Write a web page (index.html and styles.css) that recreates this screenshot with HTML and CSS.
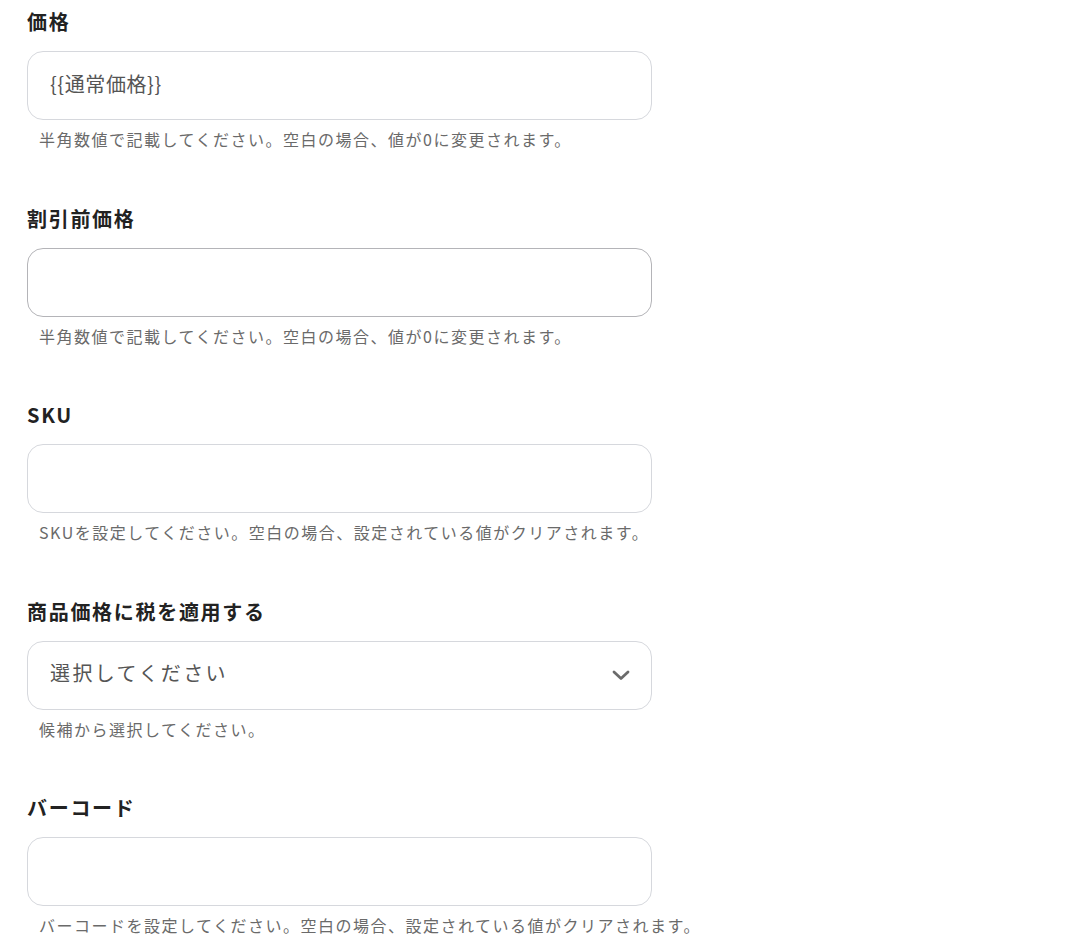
FILE: index.html
```html
<!DOCTYPE html>
<html lang="ja">
<head>
<meta charset="utf-8">
<link rel="stylesheet" href="styles.css">
</head>
<body>
<form class="form">
  <div class="field">
    <label class="label">価格</label>
    <div class="input"><span class="value value-tight">{{通常価格}}</span></div>
    <p class="help">半角数値で記載してください。空白の場合、値が0に変更されます。</p>
  </div>
  <div class="field">
    <label class="label">割引前価格</label>
    <div class="input input-hover"></div>
    <p class="help">半角数値で記載してください。空白の場合、値が0に変更されます。</p>
  </div>
  <div class="field">
    <label class="label">SKU</label>
    <div class="input"></div>
    <p class="help">SKUを設定してください。空白の場合、設定されている値がクリアされます。</p>
  </div>
  <div class="field">
    <label class="label">商品価格に税を適用する</label>
    <div class="input select"><span class="value">選択してください</span>
      <svg class="chevron" width="18" height="12" viewBox="0 0 18 12"><path d="M2 3 L9 9.5 L16 3" fill="none" stroke="#6b6b6b" stroke-width="2.8" stroke-linecap="round" stroke-linejoin="round"/></svg>
    </div>
    <p class="help">候補から選択してください。</p>
  </div>
  <div class="field">
    <label class="label">バーコード</label>
    <div class="input"></div>
    <p class="help">バーコードを設定してください。空白の場合、設定されている値がクリアされます。</p>
  </div>
</form>
</body>
</html>
```
FILE: styles.css
```css
html, body {
  margin: 0;
  padding: 0;
  background: #ffffff;
}
body {
  font-family: "Noto Sans CJK JP", "Noto Sans", sans-serif;
  color: #222;
}
.form {
  display: flex;
  flex-direction: column;
  padding: 7px 0 0 27px;
  gap: 54.5px;
}
.field {
  display: flex;
  flex-direction: column;
}
.label {
  display: block;
  font-size: 20px;
  line-height: 30px;
  font-weight: 700;
  letter-spacing: 1.7px;
  color: #222;
}
.input {
  box-sizing: border-box;
  margin-top: 14px;
  width: 625px;
  height: 69px;
  border: 1px solid #d6d8dd;
  border-radius: 16px;
  background: #fff;
  display: flex;
  align-items: center;
  padding: 0 22px;
}
.input-hover {
  border-color: #b4b4b8;
}
.value {
  font-size: 20px;
  line-height: 28px;
  letter-spacing: 2.4px;
  color: #555;
  margin-bottom: 4px;
}
.value-tight {
  letter-spacing: 0.6px;
}
.select {
  justify-content: space-between;
}
.chevron {
  margin-right: -1px;
}
.help {
  margin: 9px 0 0 12px;
  font-size: 16px;
  line-height: 20px;
  letter-spacing: 1.5px;
  color: #6a6a6a;
}
```
